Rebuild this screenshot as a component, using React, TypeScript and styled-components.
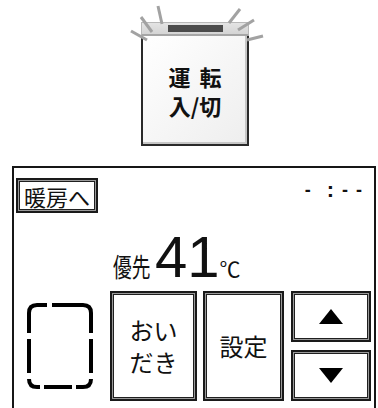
import React from "react";
import styled, { createGlobalStyle } from "styled-components";

const GlobalStyle = createGlobalStyle`
  html, body {
    margin: 0;
    padding: 0;
    background: #fff;
  }
  body {
    width: 378px;
    height: 408px;
    overflow: hidden;
    font-family: "Noto Sans CJK JP", "Liberation Sans", sans-serif;
    color: #111;
  }
`;

const Page = styled.div`
  display: flex;
  flex-direction: column;
`;

const PowerArea = styled.div`
  padding: 22px 0 0 141px;
`;

const PowerButton = styled.div`
  position: relative;
  width: 108px;
  height: 124px;
  display: flex;
  flex-direction: column;
`;

const Cap = styled.div`
  height: 14px;
  box-sizing: border-box;
  background: linear-gradient(#e4e4e4, #d4d4d4);
  border: 1px solid #b8b8b8;
  border-bottom: 2px solid #a6a6a6;
  display: flex;
  align-items: center;
  justify-content: center;
`;

const Bar = styled.div`
  width: 55px;
  height: 7px;
  background: #4b4b4b;
`;

const Face = styled.div`
  flex: 1;
  box-sizing: border-box;
  border: 2px solid #2a2a2a;
  border-top: none;
  box-shadow: inset -2px -2px 0 #c6c6c6;
  background: linear-gradient(135deg, #ffffff, #eeeeee);
  display: flex;
  flex-direction: column;
  align-items: center;
  justify-content: center;
  font-size: 22px;
  font-weight: 700;
  line-height: 29px;
  padding-top: 2px;
`;

const FaceLine = styled.div<{ $spread?: number }>`
  display: flex;
  gap: ${(p) => p.$spread ?? 0}px;
`;

const Rays = styled.svg`
  position: absolute;
  left: -16px;
  top: -22px;
  pointer-events: none;
`;

const Panel = styled.div`
  margin: 20px 0 0 12px;
  width: 364px;
  height: 250px;
  box-sizing: border-box;
  border: 2px solid #161616;
  border-bottom: none;
  display: flex;
  flex-direction: column;
`;

const TopRow = styled.div`
  display: flex;
  justify-content: space-between;
  align-items: flex-start;
  padding: 10px 12px 0 2px;
`;

const Framed = styled.div<{ $w: number; $h: number; $size?: number }>`
  width: ${(p) => p.$w}px;
  height: ${(p) => p.$h}px;
  box-sizing: border-box;
  border: 2px solid #1a1a1a;
  box-shadow: inset 0 0 0 1px #9a9a9a, inset 0 0 0 2px #1f1f1f;
  background: #fff;
  display: flex;
  flex-direction: column;
  align-items: center;
  justify-content: center;
  font-size: ${(p) => p.$size ?? 24}px;
  line-height: 32px;
  text-align: center;
  flex-shrink: 0;
`;

const Clock = styled.div`
  display: flex;
  align-items: center;
  gap: 8px;
  height: 24px;
  font-family: "Liberation Sans", sans-serif;
  font-size: 18px;
  font-weight: 700;
`;

const ClockPart = styled.span<{ $gap?: number; $size?: number }>`
  margin-right: ${(p) => p.$gap ?? 0}px;
  font-size: ${(p) => p.$size ?? 18}px;
  line-height: 24px;
`;

const TempRow = styled.div`
  display: flex;
  align-items: baseline;
  height: 58px;
  margin-top: 15px;
  padding-left: 99px;
  line-height: 58px;
`;

const Label = styled.span`
  display: inline-block;
  font-size: 26px;
  transform: scaleX(0.72);
  transform-origin: left center;
  margin-right: -10px;
`;

const Temp = styled.span`
  font-family: "Liberation Sans", sans-serif;
  font-size: 58px;
`;

const Unit = styled.span`
  font-size: 21px;
`;

const BottomRow = styled.div`
  display: flex;
  align-items: center;
  margin-top: 5px;
  padding-left: 13px;
`;

const Slot = styled.svg`
  margin-right: 17px;
  flex-shrink: 0;
`;

const Gap = styled.div<{ $w: number }>`
  width: ${(p) => p.$w}px;
  flex-shrink: 0;
`;

const ArrowColumn = styled.div`
  display: flex;
  flex-direction: column;
  gap: 8px;
`;

const Triangle = ({ up }: { up?: boolean }) => (
  <svg width="24" height="15" viewBox="0 0 24 15">
    <polygon points={up ? "12,0 24,15 0,15" : "0,0 24,0 12,15"} fill="#000" />
  </svg>
);

export default function App() {
  return (
    <Page>
      <GlobalStyle />
      <PowerArea>
        <PowerButton>
          <Cap>
            <Bar />
          </Cap>
          <Face>
            <FaceLine $spread={9}>
              <span>運</span>
              <span>転</span>
            </FaceLine>
            <FaceLine>入/切</FaceLine>
          </Face>
          <Rays width="145" height="45" viewBox="0 0 145 45">
            <g stroke="#a2a2a2" strokeWidth="3" strokeLinecap="butt">
              <line x1="33" y1="6" x2="37" y2="24" />
              <line x1="16" y1="17" x2="27" y2="32" />
              <line x1="6" y1="31" x2="22" y2="40" />
              <line x1="115" y1="9" x2="104" y2="23" />
              <line x1="129" y1="20" x2="113" y2="30" />
              <line x1="138" y1="36" x2="122" y2="40" />
            </g>
          </Rays>
        </PowerButton>
      </PowerArea>

      <Panel>
        <TopRow>
          <Framed $w={82} $h={35} $size={22}>
            暖房へ
          </Framed>
          <Clock>
            <ClockPart $gap={8}>-</ClockPart>
            <ClockPart $size={22}>:</ClockPart>
            <ClockPart>-</ClockPart>
            <ClockPart>-</ClockPart>
          </Clock>
        </TopRow>

        <TempRow>
          <Label>優先</Label>
          <Temp>41</Temp>
          <Unit>℃</Unit>
        </TempRow>

        <BottomRow>
          <Slot width="66" height="86" viewBox="0 0 66 86">
            <g fill="none" stroke="#000" strokeWidth="4">
              <path d="M2 30 V10 Q2 2 10 2 H20" />
              <path d="M25 2 H56 Q64 2 64 10 V30" />
              <path d="M2 36 V70" />
              <path d="M64 36 V70" />
              <path d="M2 76 Q2 84 10 84 H13" />
              <path d="M17 84 H45" />
              <path d="M49 84 H56 Q64 84 64 76" />
            </g>
          </Slot>
          <Framed $w={87} $h={110}>
            <div>おい</div>
            <div>だき</div>
          </Framed>
          <Gap $w={6} />
          <Framed $w={81} $h={110}>
            設定
          </Framed>
          <Gap $w={7} />
          <ArrowColumn>
            <Framed $w={80} $h={51}>
              <Triangle up />
            </Framed>
            <Framed $w={80} $h={51}>
              <Triangle />
            </Framed>
          </ArrowColumn>
        </BottomRow>
      </Panel>
    </Page>
  );
}
